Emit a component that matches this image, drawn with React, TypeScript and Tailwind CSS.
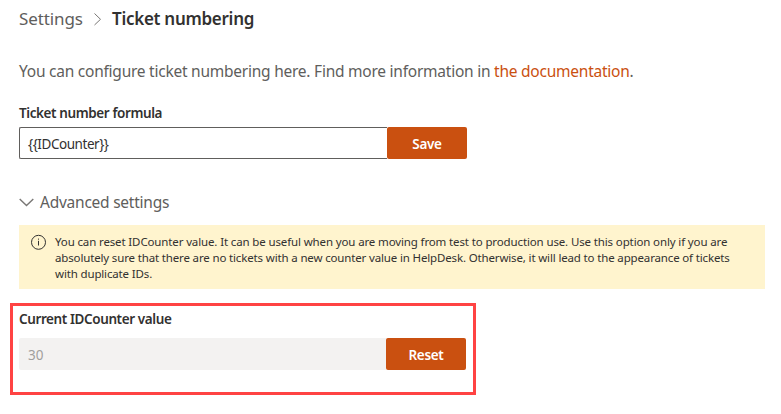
import React from "react";

function Breadcrumb() {
  return (
    <nav className="ml-[19px] flex h-[26px] items-center whitespace-nowrap text-[17px] leading-[26px]">
      <a className="w-[64px] tracking-[-0.1px] text-[#605e5c]">Settings</a>
      <svg className="ml-[10px] mr-[10px] h-[14px] w-[9px] shrink-0" viewBox="0 0 9 14" fill="none" stroke="#797775" strokeWidth="1">
        <path d="M1.5 1.5 7.5 7.3 1.5 13" />
      </svg>
      <h1 className="font-semibold tracking-[-0.28px] text-[#323130]">Ticket numbering</h1>
    </nav>
  );
}

function ActionButton({ label }: { label: string }) {
  return (
    <button className="h-8 w-[80px] shrink-0 rounded-[2px] bg-[#ca5010] pt-[2px] text-[13.5px] font-semibold tracking-[-0.3px] text-white">
      {label}
    </button>
  );
}

export default function App() {
  return (
    <main className="h-[414px] w-[781px] overflow-hidden bg-white pt-[6px] font-['Noto_Sans','Open_Sans',sans-serif] text-[#323130]">
      <Breadcrumb />

      <p className="ml-[19px] mt-[27px] h-6 whitespace-nowrap text-[15.5px] leading-6 tracking-[-0.24px] text-[#605e5c]">
        You can configure ticket numbering here. Find more information in{" "}
        <a className="text-[#ca5010]">the documentation</a>.
      </p>

      <label className="ml-[19px] mt-5 block h-5 whitespace-nowrap text-[13.5px] font-semibold leading-5 tracking-[-0.4px]">
        Ticket number formula
      </label>
      <div className="ml-[19px] mt-1 flex h-8 w-[448px]">
        <div className="flex h-8 flex-1 items-center rounded-l-[2px] border border-r-0 border-[#605e5c] pl-2 text-[13.5px] tracking-[-0.45px]">
          <span className="mt-[2px]">{"{{IDCounter}}"}</span>
        </div>
        <ActionButton label="Save" />
      </div>

      <div className="ml-[19px] mt-[31px] flex h-6 items-center whitespace-nowrap text-[15.5px] leading-6 tracking-[-0.24px] text-[#605e5c]">
        <svg className="mr-[6px] h-[9px] w-[15px]" viewBox="0 0 15 9" fill="none" stroke="#797775" strokeWidth="1.4">
          <path d="M.7 1 7.5 7.6 14.3 1" />
        </svg>
        <span>Advanced settings</span>
      </div>

      <section className="ml-[19px] mt-[11px] flex h-16 w-[746px] bg-[#fff4ce]">
        <svg className="ml-3 mt-[9px] h-4 w-4 shrink-0" viewBox="0 0 16 16" fill="none" stroke="#323130">
          <circle cx="7.5" cy="8.3" r="7" />
          <path d="M7.5 6.8V11.5M7.5 4.6v1.1" />
        </svg>
        <p className="ml-[8px] mt-[9px] whitespace-nowrap text-[11.5px] leading-4">
          <span className="block tracking-[-0.132px]">You can reset IDCounter value. It can be useful when you are moving from test to production use. Use this option only if you are</span>
          <span className="block tracking-[-0.152px]">absolutely sure that there are no tickets with a new counter value in HelpDesk. Otherwise, it will lead to the appearance of tickets</span>
          <span className="block tracking-[-0.15px]">with duplicate IDs.</span>
        </p>
      </section>

      <section className="ml-[10px] mt-[14px] h-[92px] w-[466px] border-[3px] border-[#ff4343] pl-[6px] pt-[3px]">
        <label className="block h-5 whitespace-nowrap text-[13.5px] font-semibold leading-5 tracking-[-0.4px]">
          Current IDCounter value
        </label>
        <div className="mt-[9px] flex h-8 w-[447px]">
          <div className="flex h-8 flex-1 items-center rounded-l-[2px] bg-[#f3f2f1] pl-[9px] text-[13.5px] text-[#a19f9d]">
            <span className="mt-[2px]">30</span>
          </div>
          <ActionButton label="Reset" />
        </div>
      </section>
    </main>
  );
}
